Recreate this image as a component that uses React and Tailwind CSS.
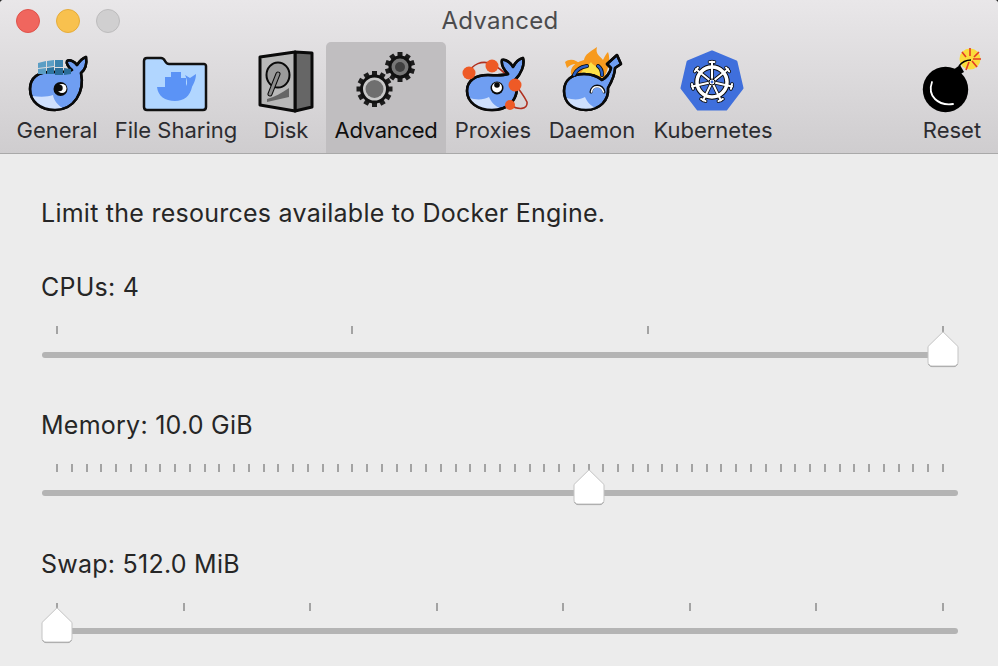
import React from 'react';

const fontClass = "font-['Inter','Noto_Sans',sans-serif]";

function Body({ d, belly }) {
  return (
    <>
      <path d={d} fill="#6f9ef2" stroke="#0a0a0a" strokeWidth="2.5" strokeLinejoin="round" />
      <path d={belly} fill="#cfe0fd" />
      <path d={d} fill="none" stroke="#0a0a0a" strokeWidth="2.5" strokeLinejoin="round" />
    </>
  );
}

function GeneralIcon() {
  return (
    <svg width="70" height="70" viewBox="22 44 70 70">
      <Body
        d="M30 89 C30 77 39 72 50 72 C58 72 66 73 72 70 C68 67 66 63 67 61 C70 59 75 62 77 65 C79 62 83 58 86 57 C87 63 86 69 81 73 C85 92 74 110 55 110 C40 110 30 101 30 89Z"
        belly="M32 96 C40 97 48 97 53 95 C54 101 58 105 63 108.5 C56 110 48 110 42 107 C37 104 34 100 32 96Z"
      />
      <path d="M38 63 l8 -2 v6 l-8 1z" fill="#5b9ec5" />
      <path d="M47 61 l7 -1 v6 l-7 1z" fill="#5b9ec5" />
      <path d="M55 60 l8 0 v7 l-8 0z" fill="#3c83ae" />
      <path d="M38 69 l8 -1 v6 l-8 0z" fill="#5b9ec5" />
      <path d="M47 68 l7 -1 v7 l-7 0z" fill="#2f76a3" />
      <path d="M55 68 l8 0 v7 l-8 0z" fill="#2b6d99" />
      <path d="M64 68 l7 1 v5 l-7 1z" fill="#2b6d99" />
      <circle cx="60.5" cy="89" r="7" fill="#0a0a0a" />
      <circle cx="62" cy="88.5" r="4.5" fill="#fff" />
      <circle cx="59.5" cy="88" r="3.2" fill="#0a0a0a" />
    </svg>
  );
}

function FolderIcon() {
  return (
    <svg width="70" height="70" viewBox="141 44 70 70">
      <path
        d="M148 58 h13 c2 0 3 1 4 3 c1 2 2 3 4 3 h35 c1 0 2 1 2 2 v41 c0 2 -1 3 -3 3 h-56 c-2 0 -3 -1 -3 -3 v-46 c0 -2 1 -3 3 -3z"
        fill="#b1d6ff"
        stroke="#111"
        strokeWidth="2.5"
        strokeLinejoin="round"
      />
      <path
        d="M157 87 h8 v-10 h6 v-5 h10 v6 h5 v8 C188 84 187 79 185 75 L190 78 L196 74 C196 80 193 85 192 87 C190 96 184 101 175 101 C165 101 158 96 157 87Z"
        fill="#5b93f6"
      />
    </svg>
  );
}

function DiskIcon() {
  return (
    <svg width="70" height="70" viewBox="251 44 70 70">
      <path d="M295 52 L312 53 L312 107 L295 111Z" fill="#666" stroke="#0a0a0a" strokeWidth="3" strokeLinejoin="round" />
      <path d="M260 57 L295 52 L295 111 L260 105Z" fill="#b8b8b8" stroke="#0a0a0a" strokeWidth="3" strokeLinejoin="round" />
      <ellipse cx="278" cy="75" rx="11.5" ry="12.5" fill="#9b9b9b" stroke="#0a0a0a" strokeWidth="2" />
      <path d="M267 99 C274 97 282 93 289 88 V97 L267 102Z" fill="#666" />
      <path d="M278 74 L270 94" stroke="#0a0a0a" strokeWidth="5" strokeLinecap="round" />
      <path d="M278 74 L270 94" stroke="#8d8d8d" strokeWidth="3" strokeLinecap="round" />
    </svg>
  );
}

function Gear({ cx, cy, ring, teeth, fill, core, coreR }) {
  const list = Array.from({ length: teeth }, (_, i) => (i * 360) / teeth);
  return (
    <g>
      {list.map((a) => (
        <rect
          key={a}
          x={cx - 2.5}
          y={cy - ring - 5}
          width="5"
          height="6"
          fill="#1c1c1c"
          transform={`rotate(${a} ${cx} ${cy})`}
        />
      ))}
      <circle cx={cx} cy={cy} r={ring} fill={fill} stroke="#111" strokeWidth="3" />
      <circle cx={cx} cy={cy} r={coreR} fill={core} />
    </g>
  );
}

function GearsIcon() {
  return (
    <svg width="70" height="70" viewBox="351 44 70 70">
      <Gear cx={400} cy={67} ring={10} teeth={10} fill="#777" core="#3f3f3f" coreR={5} />
      <Gear cx={374.5} cy={89} ring={13} teeth={12} fill="#c9c9c9" core="#6f6f6f" coreR={9} />
    </svg>
  );
}

function ProxiesIcon() {
  return (
    <svg width="70" height="70" viewBox="458 44 70 70">
      <path d="M469 73 C472 64 482 60 492 64 C505 70 522 92 527 102 C528 110 518 110 510 105" fill="none" stroke="#b0301f" strokeWidth="1.6" />
      <Body
        d="M467 91 C467 80 476 75 488 75 C495 75 502 76 508 74 C504 70 501 65 502 60 C506 59 511 63 513 67 C515 63 519 59 523 58 C525 65 521 74 515 80 C521 97 510 110 492 110 C478 110 467 102 467 91Z"
        belly="M469 98 C476 100 484 100 489 97 C491 102 495 106 500 108 C494 110 486 110 480 108 C475 106 471 102 469 98Z"
      />
      <circle cx="497" cy="88" r="6.5" fill="#0a0a0a" />
      <circle cx="497" cy="87.5" r="5" fill="#fff" />
      <circle cx="497" cy="85" r="2.8" fill="#0a0a0a" />
      <circle cx="469" cy="73" r="6.5" fill="#ee5a26" />
      <circle cx="492" cy="66" r="6.5" fill="#ee5a26" />
      <circle cx="515" cy="85" r="6.5" fill="#ee5a26" />
      <circle cx="510" cy="105" r="5" fill="#ee5a26" />
    </svg>
  );
}

function DaemonIcon() {
  return (
    <svg width="70" height="70" viewBox="557 44 70 70">
      <path d="M572 76 C568 68 576 62 584 60 C585 54 590 52 597 47 C595 54 600 56 603 60 C605 56 606 54 608 52 C611 60 608 70 604 78Z" fill="#f79a1e" />
      <path d="M565 62 C570 58 577 60 581 65 C575 63 571 64 567 68Z" fill="#f79a1e" />
      <path d="M580 75 C583 68 588 66 591 62 C593 66 602 68 603 76Z" fill="#fde047" />
      <Body
        d="M564 91 C564 80 572 74 584 74 C591 74 597 76 602 80 C606 78 610 73 611 68 L607 64 L617 55 L621 64 L615 68 C615 75 612 81 608 88 C609 100 600 110 586 110 C572 110 564 102 564 91Z"
        belly="M566 98 C574 100 580 100 585 97 C587 102 591 106 596 108 C590 110 582 110 576 108 C571 106 568 102 566 98Z"
      />
      <path d="M574 75 C576 70 581 67 587 66" fill="none" stroke="#0a0a0a" strokeWidth="4" strokeLinecap="round" />
      <path d="M574 75 C576 70 581 67 587 66" fill="none" stroke="#2a5fc4" strokeWidth="2.4" strokeLinecap="round" />
      <path d="M602 75 C602 71 601 68 598 66" fill="none" stroke="#0a0a0a" strokeWidth="4" strokeLinecap="round" />
      <path d="M602 75 C602 71 601 68 598 66" fill="none" stroke="#2a5fc4" strokeWidth="2.4" strokeLinecap="round" />
      <path d="M591 92 C592 84 602 84 604 92" fill="none" stroke="#0a0a0a" strokeWidth="3" strokeLinecap="round" />
      <path d="M591.5 92 C592.5 85 601.5 85 603.5 92" fill="none" stroke="#fff" strokeWidth="1.6" strokeLinecap="round" />
    </svg>
  );
}

function KubeIcon() {
  const spokes = Array.from({ length: 7 }, (_, i) => (i * 360) / 7);
  const wheel = (color, ringW, w) => (
    <g stroke={color} fill="none" strokeLinecap="round">
      <circle cx="712" cy="82" r="15" strokeWidth={ringW} />
      {spokes.map((a) => (
        <g key={a} transform={`rotate(${a} 712 82)`} strokeWidth={w}>
          <line x1="712" y1="82" x2="712" y2="61.5" />
          <line x1="709.5" y1="62" x2="714.5" y2="62" />
        </g>
      ))}
    </g>
  );
  return (
    <svg width="70" height="70" viewBox="678 44 70 70">
      <path
        d="M712 52 L736 62 L742 88 L726 109 L698 109 L682 88 L688 62Z"
        fill="#3f6fdc"
        stroke="#3f6fdc"
        strokeWidth="3"
        strokeLinejoin="round"
      />
      {wheel('#0a0a0a', 5.5, 3.6)}
      {wheel('#fff', 3.5, 2)}
      <circle cx="712" cy="82" r="3" fill="#fff" stroke="#0a0a0a" strokeWidth="1" />
      <circle cx="712" cy="82" r="1.4" fill="#3f6fdc" />
    </svg>
  );
}

function BombIcon() {
  return (
    <svg width="70" height="70" viewBox="917 44 70 70">
      <circle cx="970" cy="59" r="10.5" fill="#fbdc3c" />
      <path d="M970 48 V56 M962 52 L966 57 M979 52 L974 57 M981 59 H973 M977 67 L972 61 M966 70 L969 62" stroke="#e33b25" strokeWidth="1.6" />
      <path d="M953 70 L960 65 L964 72 L957 76Z" fill="#000" />
      <path d="M959 66 C962 62 966 60 971 60" fill="none" stroke="#000" strokeWidth="1.4" />
      <circle cx="945.5" cy="89.5" r="22.7" fill="#000" />
      <path d="M932 82 C927 96 938 106 953 104" fill="none" stroke="#fff" strokeWidth="1.8" strokeLinecap="round" />
    </svg>
  );
}

const tabs = [
  { label: 'General', icon: <GeneralIcon />, width: 'w-[98px]' },
  { label: 'File Sharing', icon: <FolderIcon />, width: 'w-[140px]' },
  { label: 'Disk', icon: <DiskIcon />, width: 'w-[80px]' },
  { label: 'Advanced', icon: <GearsIcon />, width: 'w-[120px]', active: true },
  { label: 'Proxies', icon: <ProxiesIcon />, width: 'w-[94px]' },
  { label: 'Daemon', icon: <DaemonIcon />, width: 'w-[104px]' },
  { label: 'Kubernetes', icon: <KubeIcon />, width: 'w-[138px]' },
];

function Tab({ label, icon, width, active, className = '' }) {
  return (
    <div
      className={`${width} ${className} flex flex-col items-center pt-[2px] rounded-t-[5px] ${
        active ? 'bg-[#c0bec0] text-[#0f0f0f] tracking-[-0.3px]' : 'text-[#2c2c30]'
      }`}
    >
      {icon}
      <span className="mt-[2px] text-[22px] leading-[28px] whitespace-nowrap">{label}</span>
    </div>
  );
}

function Slider({ label, ticks, value, trackClass }) {
  const marks = Array.from({ length: ticks }, (_, i) => i);
  return (
    <div>
      <div className="text-[25px] tracking-[0.25px] leading-[30px] text-[#262626]">{label}</div>
      <div className="mt-[24px] h-2 px-[15px] flex justify-between">
        {marks.map((m) => (
          <div key={m} className="w-[2px] h-2 bg-[#a3a3a3]" />
        ))}
      </div>
      <div className={`${trackClass} relative h-[6px] mx-[1px] bg-[#b4b4b4] rounded-full`}>
        <div className="absolute inset-x-[15px] top-0">
          <svg
            className="absolute top-[-21px] overflow-visible"
            style={{ left: `calc(${value}% - 16px)` }}
            width="32"
            height="36"
            viewBox="0 0 32 36"
          >
            <path
              d="M16 0.8 L31 15.5 V31 C31 33.5 29.5 35 27 35 H5 C2.5 35 1 33.5 1 31 V15.5Z"
              fill="#fff"
              stroke="#c4c4c4"
              strokeWidth="1"
              strokeLinejoin="round"
            />
            <path d="M1.5 33 C2.5 35 3.5 35.6 5 35.6 H27 C28.5 35.6 29.5 35 30.5 33" fill="none" stroke="#ababab" strokeWidth="1" />
          </svg>
        </div>
      </div>
    </div>
  );
}

export default function App() {
  return (
    <div className={`${fontClass} w-[998px] h-[666px] overflow-hidden bg-[#2a2a2a]`}>
      <div className="h-full rounded-t-[4px] overflow-hidden bg-[#ececec]">
        <div className="h-[154px] border-b border-[#a9a9a9] bg-gradient-to-b from-[#e9e7e9] to-[#cfcdcf]">
          <div className="h-[42px] pl-4 flex items-center relative">
            <div className="flex gap-4">
              <div className="w-6 h-6 rounded-full bg-[#f0665e] border border-[#e0524a]" />
              <div className="w-6 h-6 rounded-full bg-[#f8c14e] border border-[#e6ac3a]" />
              <div className="w-6 h-6 rounded-full bg-[#d0cfd0] border border-[#bdbcbd]" />
            </div>
            <div className="absolute left-0 right-0 top-0 pl-[2px] text-center text-[24px] tracking-[0.3px] leading-[42px] text-[#4b4b4d]">
              Advanced
            </div>
          </div>
          <div className="h-[111px] pl-2 flex">
            {tabs.map((t) => (
              <Tab key={t.label} {...t} />
            ))}
            <Tab label="Reset" icon={<BombIcon />} width="w-[92px]" className="ml-auto" />
          </div>
        </div>
        <div className="pt-[44px] px-[41px] text-[25px] tracking-[0.25px] leading-[30px] text-[#262626]">
          Limit the resources available to Docker Engine.
        </div>
        <div className="pl-[41px] pr-[39px] mt-[44px]">
          <Slider label="CPUs: 4" ticks={4} value={100} trackClass="mt-[18px]" />
        </div>
        <div className="pl-[41px] pr-[39px] mt-[52px]">
          <Slider label="Memory: 10.0 GiB" ticks={61} value={60} trackClass="mt-[18px]" />
        </div>
        <div className="pl-[41px] pr-[39px] mt-[53px]">
          <Slider label="Swap: 512.0 MiB" ticks={8} value={0} trackClass="mt-[17px]" />
        </div>
      </div>
    </div>
  );
}
